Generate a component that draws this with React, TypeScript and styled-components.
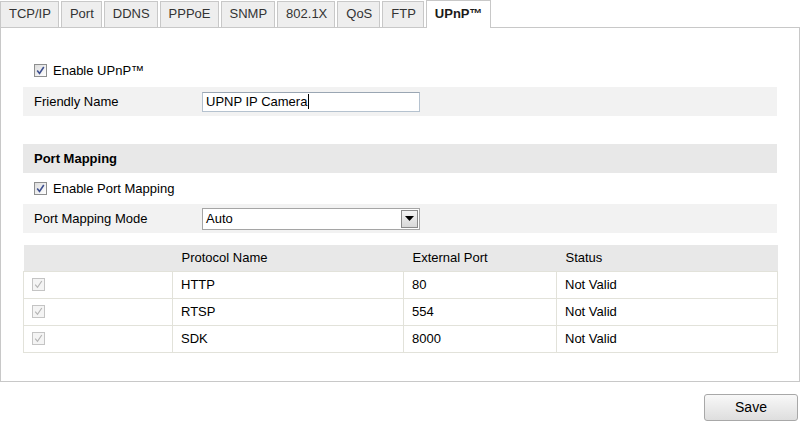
import { createGlobalStyle } from 'styled-components';
import styled from 'styled-components';

const GlobalStyle = createGlobalStyle`
    body {
        margin: 0;
        background: #ffffff;
        font-family: "Liberation Sans", Arial, sans-serif;
        font-size: 13px;
        color: #000000;
    }
`;

const Page = styled.div`
    width: 800px;
`;

const TabBar = styled.div`
    position: relative;
    z-index: 1;
    display: flex;
    align-items: flex-end;
    height: 28px;
    margin-bottom: -1px;
`;

const Tab = styled.div<{ active?: boolean }>`
    box-sizing: border-box;
    height: ${props => (props.active ? '28px' : '27px')};
    line-height: ${props => (props.active ? '26px' : '24px')};
    padding: 0 7px 0 8px;
    margin-right: 2px;
    border: 1px solid #c8c8c8;
    border-bottom: ${props => (props.active ? 'none' : '1px solid #c8c8c8')};
    background: ${props => (props.active ? '#ffffff' : '#eeeeee')};
    color: ${props => (props.active ? '#1a1a1a' : '#333333')};
    font-weight: ${props => (props.active ? 'bold' : 'normal')};
    white-space: nowrap;
`;

const Panel = styled.div`
    box-sizing: border-box;
    width: 800px;
    border: 1px solid #c8c8c8;
    padding: 27px 22px 28px;
`;

const CheckRow = styled.label<{ height: number }>`
    display: flex;
    align-items: center;
    gap: 6px;
    height: ${props => props.height}px;
    padding-left: 11px;
`;

const Box = styled.span<{ disabled?: boolean }>`
    box-sizing: border-box;
    display: inline-flex;
    align-items: center;
    justify-content: center;
    width: 13px;
    height: 13px;
    border: 1px solid ${props => (props.disabled ? '#c4c4c4' : '#8e8f8f')};
    background: ${props => (props.disabled ? '#f4f4f4' : 'linear-gradient(135deg, #dcdcdc, #ffffff)')};
`;

const FieldRow = styled.div<{ gapAbove?: number }>`
    display: flex;
    align-items: center;
    height: 29px;
    margin-top: ${props => props.gapAbove ?? 0}px;
    background: #f2f2f2;
`;

const Label = styled.span`
    width: 168px;
    padding-left: 11px;
`;

const TextBox = styled.div`
    box-sizing: border-box;
    display: flex;
    align-items: center;
    width: 218px;
    height: 20px;
    padding-left: 3px;
    background: #ffffff;
    border: 1px solid #b5c2cf;
    border-top-color: #9aa6b3;
`;

const Caret = styled.span`
    display: inline-block;
    width: 1px;
    height: 15px;
    margin-left: 1px;
    background: #000000;
`;

const Select = styled.div`
    box-sizing: border-box;
    display: flex;
    align-items: center;
    justify-content: space-between;
    width: 218px;
    height: 22px;
    padding: 0 1px 0 3px;
    background: #ffffff;
    border: 1px solid #a5a5a5;
`;

const DropButton = styled.span`
    box-sizing: border-box;
    display: flex;
    align-items: center;
    justify-content: center;
    width: 17px;
    height: 18px;
    border: 1px solid #8a8a8a;
    background: linear-gradient(#f4f4f4, #d8d8d8);
`;

const SectionHead = styled.div`
    display: flex;
    align-items: center;
    height: 29px;
    margin-top: 28px;
    padding-left: 11px;
    background: #e8e8e8;
    font-weight: bold;
`;

const Table = styled.table`
    width: 754px;
    margin-top: 12px;
    border-collapse: collapse;
    table-layout: fixed;
`;

const HeadCell = styled.th<{ width: number }>`
    box-sizing: border-box;
    width: ${props => props.width}px;
    height: 26px;
    padding: 0 0 0 9px;
    background: #e8e8e8;
    font-weight: normal;
    text-align: left;
`;

const Cell = styled.td`
    height: 26px;
    padding: 0 0 0 8px;
    border: 1px solid #e2e2da;
`;

const Footer = styled.div`
    display: flex;
    justify-content: flex-end;
    padding: 12px 2px 0 0;
`;

const SaveButton = styled.button`
    width: 94px;
    height: 27px;
    border: 1px solid #a8a8a8;
    border-radius: 3px;
    background: linear-gradient(#f8f8f8, #dedede);
    font-family: "Liberation Sans", Arial, sans-serif;
    font-size: 14px;
    color: #000000;
`;

function CheckBox({ disabled }: { disabled?: boolean }) {
    return (
        <Box disabled={disabled}>
            <svg width="9" height="9" viewBox="0 0 9 9">
                <path
                    d="M1.2 4.6 L3.5 7.4 L7.8 1"
                    fill="none"
                    stroke={disabled ? '#b4b4b4' : '#3d4f8f'}
                    strokeWidth={disabled ? 1.1 : 1.6}
                />
            </svg>
        </Box>
    );
}

const tabs = ['TCP/IP', 'Port', 'DDNS', 'PPPoE', 'SNMP', '802.1X', 'QoS', 'FTP', 'UPnP™'];

const mappings = [
    { name: 'HTTP', port: '80', status: 'Not Valid' },
    { name: 'RTSP', port: '554', status: 'Not Valid' },
    { name: 'SDK', port: '8000', status: 'Not Valid' },
];

export default function App() {
    return (
        <Page>
            <GlobalStyle />
            <TabBar>
                {tabs.map(t => (
                    <Tab key={t} active={t === 'UPnP™'}>
                        {t}
                    </Tab>
                ))}
            </TabBar>
            <Panel>
                <CheckRow height={30}>
                    <CheckBox />
                    Enable UPnP™
                </CheckRow>
                <FieldRow gapAbove={2}>
                    <Label>Friendly Name</Label>
                    <TextBox>
                        UPNP IP Camera
                        <Caret />
                    </TextBox>
                </FieldRow>

                <SectionHead>Port Mapping</SectionHead>
                <CheckRow height={31}>
                    <CheckBox />
                    Enable Port Mapping
                </CheckRow>
                <FieldRow>
                    <Label>Port Mapping Mode</Label>
                    <Select>
                        Auto
                        <DropButton>
                            <svg width="9" height="5" viewBox="0 0 9 5">
                                <path d="M0 0 H9 L4.5 5 Z" fill="#000" />
                            </svg>
                        </DropButton>
                    </Select>
                </FieldRow>

                <Table>
                    <thead>
                        <tr>
                            <HeadCell width={149} />
                            <HeadCell width={231}>Protocol Name</HeadCell>
                            <HeadCell width={153}>External Port</HeadCell>
                            <HeadCell width={221}>Status</HeadCell>
                        </tr>
                    </thead>
                    <tbody>
                        {mappings.map(m => (
                            <tr key={m.name}>
                                <Cell>
                                    <CheckBox disabled />
                                </Cell>
                                <Cell>{m.name}</Cell>
                                <Cell>{m.port}</Cell>
                                <Cell>{m.status}</Cell>
                            </tr>
                        ))}
                    </tbody>
                </Table>
            </Panel>
            <Footer>
                <SaveButton type="button">Save</SaveButton>
            </Footer>
        </Page>
    );
}
